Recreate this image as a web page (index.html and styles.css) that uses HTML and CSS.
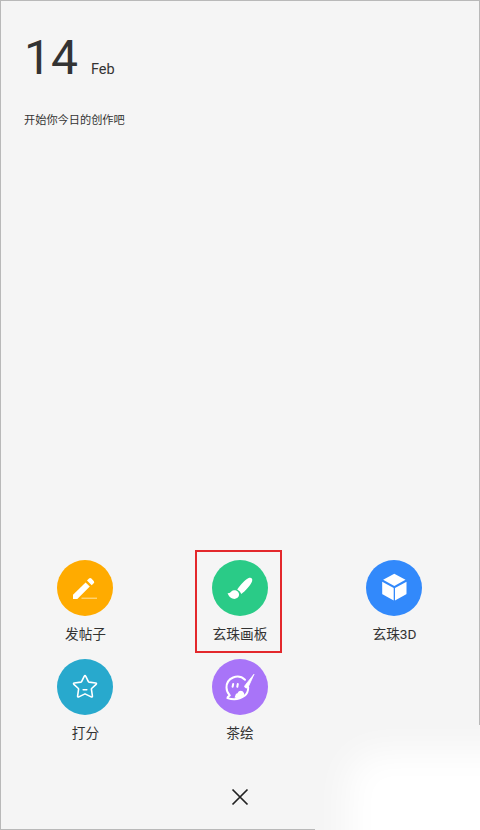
FILE: index.html
```html
<!DOCTYPE html>
<html lang="zh-CN">
<head>
<meta charset="utf-8">
<title>创作</title>
<link rel="stylesheet" href="styles.css">
</head>
<body>
<main class="screen">
  <header class="intro">
    <div class="date"><span class="day">14</span><span class="month">Feb</span></div>
    <p class="prompt">开始你今日的创作吧</p>
  </header>
  <nav class="actions">
    <a class="action">
      <svg class="icon post" viewBox="0 0 56 56"><path d="M16 39v-4.300L28.600 22.400l4.200 4.200L20.300 39z"/><path d="M30 20.600l2-2q1.200-1 2.400 0l2.300 2.300q1.200 1.200 0 2.400l-2 1.900z"/><path class="rule" d="M24.500 38.200H40"/></svg>
      <span class="label">发帖子</span>
    </a>
    <a class="action selected">
      <svg class="icon board" viewBox="0 0 56 56"><path d="M25.200 29.500C28.500 25 33 19.800 36.200 18.300c2.800-1.200 4.800.2 3.900 2.900-1.300 4-7 9.900-10.800 12.800q-.9-3-4.100-4.500z"/><path d="M15.600 33.100c3.200.8 3.200-2.400 6.300-2.800 2.900-.2 5.300 2 5.200 4.500-.2 3-3.200 4.600-6 4-2.700-.5-4.800-2.900-5.500-5.700z"/></svg>
      <span class="label">玄珠画板</span>
    </a>
    <a class="action">
      <svg class="icon cube" viewBox="0 0 56 56"><path d="M28.300 13.800l11.200 6-11.200 6.300-11.200-6.300z"/><path d="M16.200 21.700l11.500 6.200v12.500L16.900 34.600q-.7-.4-.7-1.200z"/><path d="M40.500 21.700l-11.500 6.200v12.500l10.800-5.800q.7-.4.700-1.200z"/></svg>
      <span class="label">玄珠3D</span>
    </a>
    <a class="action">
      <svg class="icon score" viewBox="0 0 56 56"><path d="M27.200 17.300Q28 15.900 28.800 17.300L31.400 22.600Q31.600 23 32.100 23.100L38.600 24Q40.100 24.300 39.100 25.400L34.600 29.500Q34.300 29.800 34.400 30.200L35.400 37Q35.500 38.400 34.200 37.900L28.500 35.100Q28 34.900 27.500 35.100L21.800 37.900Q20.500 38.400 20.600 37L21.600 30.200Q21.700 29.800 21.400 29.500L16.900 25.400Q15.900 24.300 17.400 24L23.900 23.100Q24.400 23 24.600 22.600Z"/><path d="M26.200 30.800h3.600"/></svg>
      <span class="label">打分</span>
    </a>
    <a class="action">
      <svg class="icon tea" viewBox="0 0 56 56"><path class="line" d="M33 20.700C26 14 14.500 19 14.500 28.500c0 3.700 1.700 6.200 3.300 7.900-1 .7-2.600 1.600-2.400 2.700 5.400 1.800 12.400 1.300 17.200-2.300 2.700-2.200 3.600-5 3.600-8.300"/><path class="brush" d="M42 15.200L36 28.500q-2 1.400-3.400-.5.100-1.600 1.400-2.800z"/><path d="M22.500 38.500c1.200-1.700.7-4 3-4.200 1.200-3.100 5-3.300 6.400-.4.800 1.500.4 2.700-.8 3.800q-3.500 2.400-8.600.8z"/><path class="eyes" d="M21.200 25l-.6 2.800M25.800 25l-.5 2.800"/></svg>
      <span class="label">茶绘</span>
    </a>
  </nav>
  <footer class="footer">
    <svg class="close" viewBox="0 0 18 18"><path d="M1.500 1.500l15 15M16.500 1.500l-15 15"/></svg>
  </footer>
  <div class="glow"></div>
</main>
</body>
</html>
```
FILE: styles.css
```css
*, *::before { box-sizing: border-box; }

body {
  margin: 0;
  font-family: Roboto, "Noto Sans CJK SC", sans-serif;
  color: #333;
}

.screen {
  position: relative;
  display: flex;
  flex-direction: column;
  height: 830px;
  padding: 1px;
  box-shadow: inset 0 0 0 1px #b9b9b9;
  background: #f5f5f5;
  overflow: hidden;
}

.intro { padding: 29px 23px 0; }

.date { display: flex; align-items: baseline; line-height: 56px; }
.day { font-size: 48px; width: 67px; }
.month { font-size: 14.5px; }

.prompt {
  margin: 14px 0 0;
  font-size: 11.2px;
  line-height: 18px;
}

.actions {
  display: grid;
  grid-template-columns: repeat(3, 154.5px);
  grid-auto-rows: 99px;
  margin: auto 0 0 6.75px;
}

.action {
  position: relative;
  display: flex;
  flex-direction: column;
  align-items: center;
}

.selected::before {
  content: "";
  position: absolute;
  left: 32.75px;
  top: -10px;
  width: 87px;
  height: 103px;
  border: 2px solid #e3282c;
}

.icon {
  width: 56px;
  height: 56px;
  border-radius: 50%;
  fill: #fff;
}

.post { background: #ffab00; }
.board { background: #2acb87; }
.cube { background: #3289fb; }
.score { background: #28a9cd; }
.tea { background: #a874f8; }

.rule { stroke: #ffe3a3; stroke-width: 1; }

.score path, .tea .line, .tea .eyes {
  fill: none;
  stroke: #fff;
  stroke-width: 1.6;
  stroke-linecap: round;
  stroke-linejoin: round;
}

.tea .line, .tea .eyes { stroke-width: 2; }
.tea .brush { stroke: #fff; stroke-width: .8; stroke-linejoin: round; }

.label {
  margin: 8px 0 0 1px;
  font-size: 13.7px;
  line-height: 20px;
}

.footer {
  display: flex;
  justify-content: center;
  padding: 30px 0 23px;
}

.close {
  width: 18px;
  height: 18px;
  fill: none;
  stroke: #222;
  stroke-width: 1.7;
}

.glow {
  position: absolute;
  left: 315px;
  top: 725px;
  width: 165px;
  height: 105px;
  overflow: hidden;
  background: #f5f5f5;
}

.glow::before {
  content: "";
  position: absolute;
  left: 32px;
  top: 27px;
  width: 260px;
  height: 200px;
  border-radius: 30px;
  background: #fff;
  filter: blur(18px);
}
```
